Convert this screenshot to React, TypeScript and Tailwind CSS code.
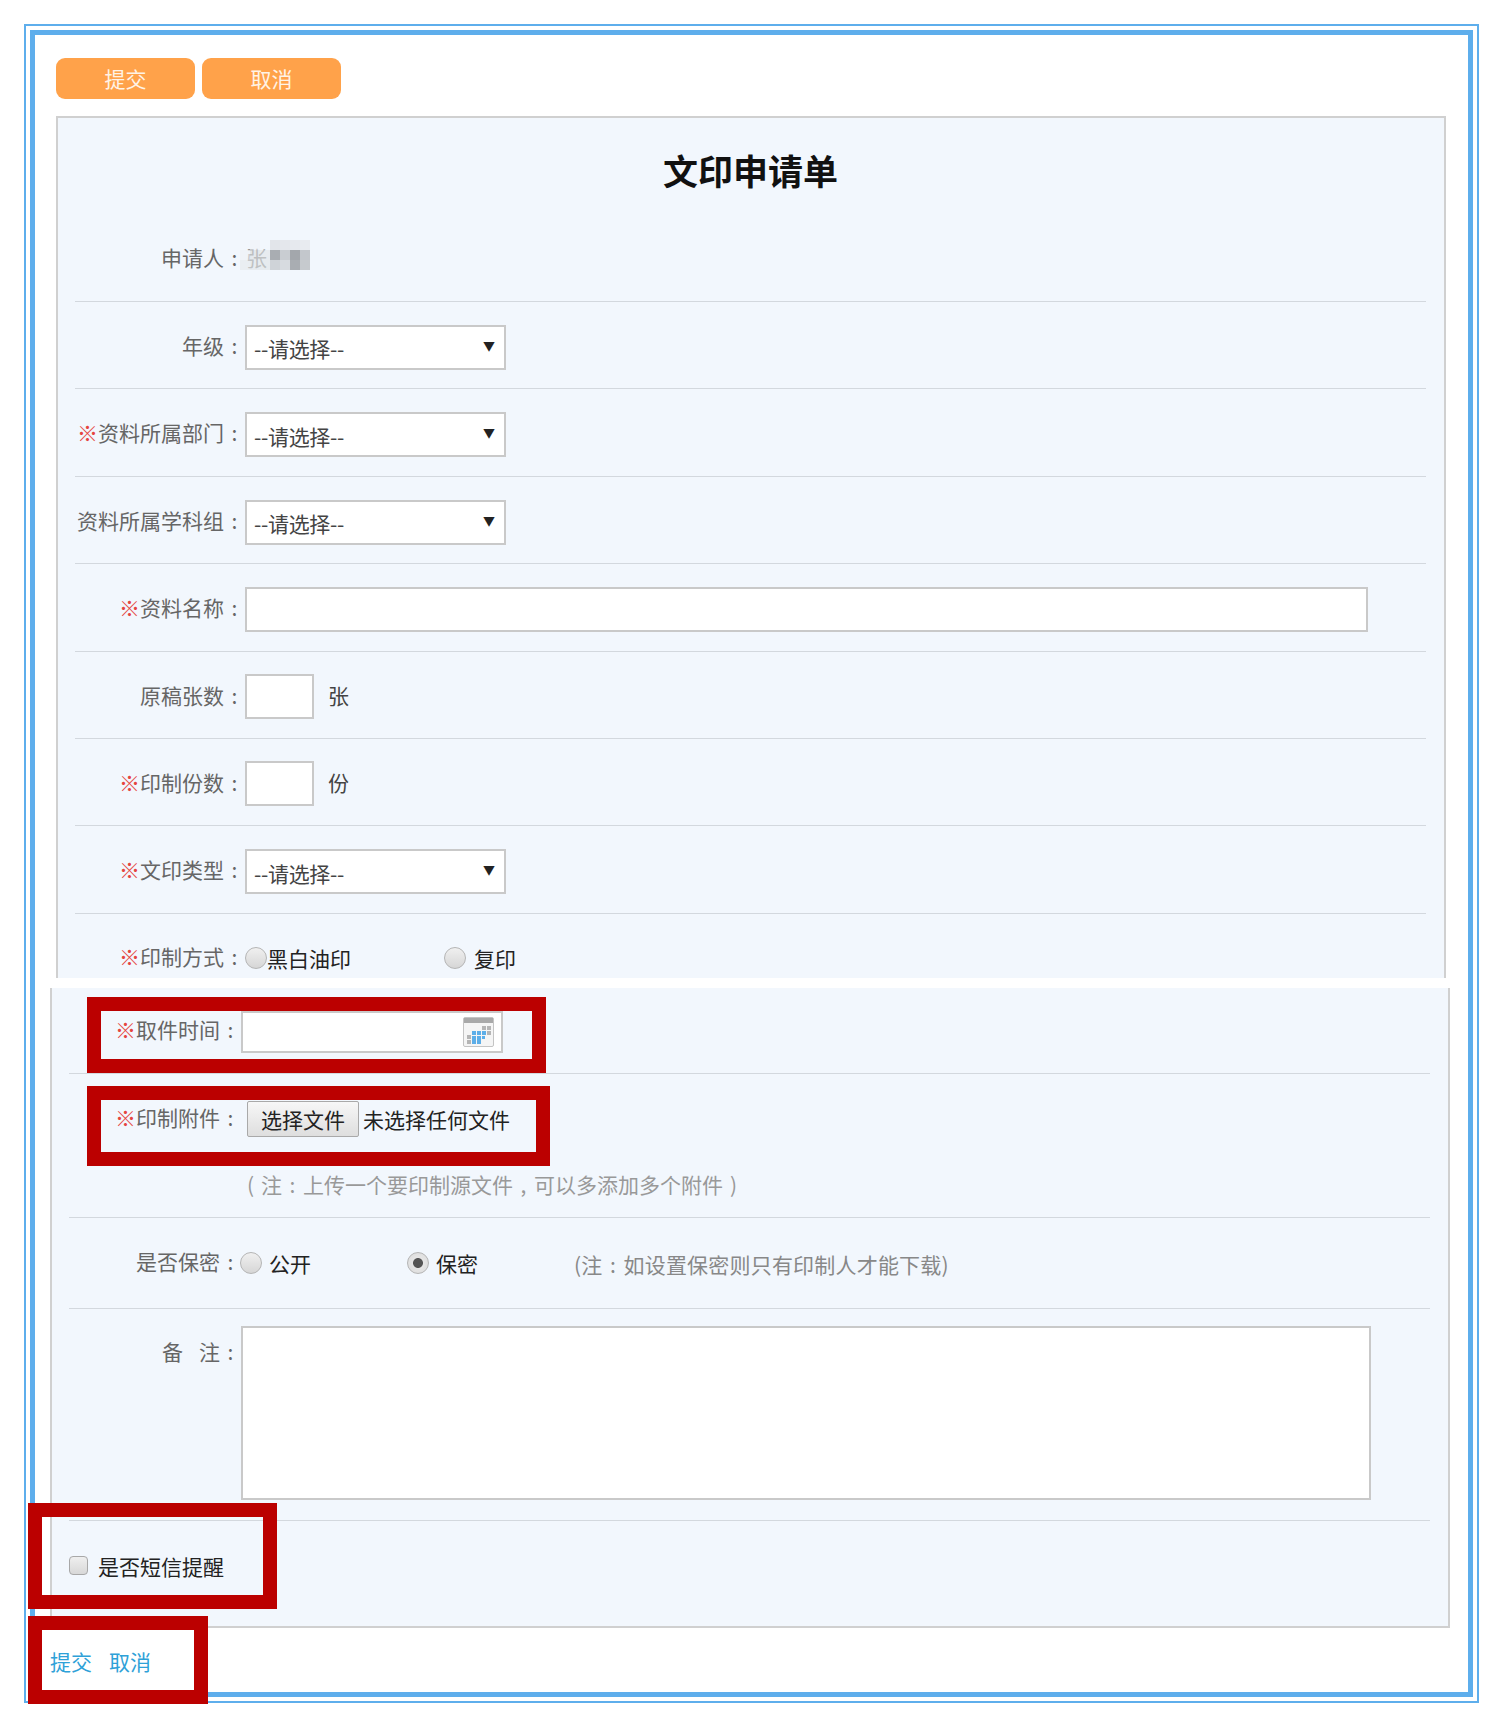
import type { ReactNode } from 'react';

const rowLine = 'border-b border-[#d3d8de]';
const fieldBorder = 'border-2 border-[#c9c9c9] bg-white outline-none';
const radioClass =
  "h-[22px] w-[22px] shrink-0 appearance-none rounded-full border border-[#b5b5b5] bg-[linear-gradient(#f0f0f0,#d6d6d6)] checked:bg-[radial-gradient(circle,#555_0,#555_32%,#e6e6e6_38%,#d9d9d9_100%)]";

// punctuation in the original sits centred in a full-width cell
function Cell({ children }: { children: ReactNode }) {
  return <span className="inline-block w-[21px] text-center">{children}</span>;
}

function Label({ children, required, className = 'w-[170px]' }: { children: ReactNode; required?: boolean; className?: string }) {
  return (
    <div className={`${className} shrink-0 text-right text-[21px] leading-[40px] text-[#666]`}>
      {required && <span className="text-[#e5453f]">※</span>}
      {children}
      <Cell>:</Cell>
    </div>
  );
}

function SelectBox() {
  return (
    <div className="relative h-[45px] w-[261px]">
      <select className={`${fieldBorder} h-full w-full appearance-none pl-[7px] pt-[3px] text-[21px] tracking-[-0.3px] text-[#444]`}>
        <option>--请选择--</option>
      </select>
      <span className="pointer-events-none absolute right-[11px] top-[11px] text-[12px] leading-[20px] text-[#222]">▼</span>
    </div>
  );
}

function FormRow({ label, required, children }: { label: string; required?: boolean; children: ReactNode }) {
  return (
    <div className={`flex h-[87.4px] pt-[23px] ${rowLine}`}>
      <Label required={required}>{label}</Label>
      {children}
    </div>
  );
}

function Mosaic() {
  const cells = [
    [0, 10, '#eef1f4'], [0, 20, '#e4e8ea'], [10, 0, '#f0f3f6'], [10, 10, '#d9dde0'], [10, 20, '#dfe3e6'],
    [20, 10, '#e0e4e6'], [20, 20, '#dde1e4'], [30, 0, '#e2e5ea'], [30, 10, '#a9adb2'], [30, 20, '#cfd3d8'],
    [40, 0, '#e4e7ec'], [40, 10, '#c9cdd2'], [40, 20, '#d7dbe0'], [50, 0, '#e6e9ee'], [50, 10, '#a3a7ac'],
    [50, 20, '#a9adb2'], [60, 0, '#e8ebf0'], [60, 10, '#c3c7cc'], [60, 20, '#c6cace'],
  ] as const;
  return (
    <svg className="absolute left-[240px] top-0" width="70" height="30" viewBox="0 0 70 30">
      {cells.map(([x, y, fill]) => (
        <rect key={`${x}-${y}`} x={x} y={y} width="10" height="10" fill={fill} fillOpacity={x < 30 ? 0.55 : 1} />
      ))}
    </svg>
  );
}

function CalendarIcon() {
  return (
    <svg className="absolute right-[9px] top-[6px]" width="31" height="30" viewBox="0 0 31 30">
      <rect x="0.5" y="0.5" width="30" height="29" rx="1.5" fill="#f5f5f5" stroke="#c4c4c4" />
      <rect x="1" y="1" width="29" height="5" fill="#a9a9a9" />
      <g fill="#b5b5b5">
        <rect x="19" y="9" width="4" height="4" />
        <rect x="24" y="9" width="4" height="4" />
        <rect x="24" y="14" width="4" height="4" />
        <rect x="4" y="18" width="4" height="4" />
        <rect x="4" y="23" width="4" height="4" />
      </g>
      <g fill="#5daee8">
        <rect x="9" y="14" width="4" height="4" />
        <rect x="14" y="14" width="4" height="4" />
        <rect x="19" y="14" width="4" height="4" />
        <rect x="9" y="19" width="4" height="8" />
        <rect x="14" y="19" width="4" height="8" />
        <rect x="19" y="19" width="3" height="3" />
      </g>
    </svg>
  );
}

function RedBox({ className }: { className: string }) {
  return <div className={`pointer-events-none absolute border-[14px] border-[#bb0000] ${className}`} />;
}

export default function App() {
  return (
    <div className="relative h-[1727px] w-[1503px] bg-white pl-[24px] pt-[24px] font-['Noto_Sans_CJK_SC',sans-serif]">
      <div className="h-[1679px] w-[1455px] border-2 border-[#5eaeec] p-[4px]">
        <div className="h-full border-[5px] border-[#5eaeec] pl-[21px] pt-[23px]">
          <div className="flex gap-[7px]">
            <button type="button" className="h-[41px] w-[139px] rounded-[9px] bg-[#ffa24a] text-[21px] text-[#fff3e6]">提交</button>
            <button type="button" className="h-[41px] w-[139px] rounded-[9px] bg-[#ffa24a] text-[21px] text-[#fff3e6]">取消</button>
          </div>

          <div className="mt-[17px] h-[862px] w-[1390px] border-x-2 border-t-2 border-[#d0d0d0] bg-[#f2f7fd] pl-[17px] pr-[18px]">
            <h1 className="h-[108px] text-center text-[35px] font-bold leading-[104px] text-[#111]">文印申请单</h1>
            <div className={`flex h-[76px] pt-[11px] ${rowLine}`}>
              <Label>申请人</Label>
              <div className="relative">
                <span className="pl-[1px] text-[21px] leading-[40px] text-[#999]">张</span>
              </div>
            </div>
            <FormRow label="年级"><SelectBox /></FormRow>
            <FormRow label="资料所属部门" required><SelectBox /></FormRow>
            <FormRow label="资料所属学科组"><SelectBox /></FormRow>
            <FormRow label="资料名称" required>
              <input className={`${fieldBorder} h-[45px] w-[1123px]`} />
            </FormRow>
            <FormRow label="原稿张数">
              <input className={`${fieldBorder} -mt-px h-[45px] w-[69px]`} />
              <span className="ml-[14px] text-[21px] leading-[40px] text-[#444]">张</span>
            </FormRow>
            <FormRow label="印制份数" required>
              <input className={`${fieldBorder} -mt-px h-[45px] w-[69px]`} />
              <span className="ml-[14px] text-[21px] leading-[40px] text-[#444]">份</span>
            </FormRow>
            <FormRow label="文印类型" required><SelectBox /></FormRow>
            <div className="flex pt-[22px]">
              <Label required>印制方式</Label>
              <label className="flex h-[40px] w-[199px] items-center text-[21px] text-[#222]">
                <input type="radio" name="mode" className={`${radioClass} mt-[4px]`} />
                <span className="mt-[7px]">黑白油印</span>
              </label>
              <label className="flex h-[40px] items-center gap-[8px] text-[21px] text-[#222]">
                <input type="radio" name="mode" className={`${radioClass} mt-[4px]`} />
                <span className="mt-[7px]">复印</span>
              </label>
            </div>
          </div>

          <div className="-ml-[6px] mt-[10px] h-[640px] w-[1400px] border-x-2 border-b-2 border-[#d0d0d0] bg-[#f2f7fd] pl-[17px] pr-[18px]">
            <div className={`flex h-[86px] pt-[23px] ${rowLine}`}>
              <Label required className="-mt-[2px] w-[172px]">取件时间</Label>
              <div className="relative h-[42px] w-[262px]">
                <input className={`${fieldBorder} h-full w-full`} />
                <CalendarIcon />
              </div>
            </div>
            <div className={`h-[144px] pt-[24px] ${rowLine}`}>
              <div className="flex">
                <Label required className="-mt-px w-[172px]">印制附件</Label>
                <div className="ml-[6px] flex items-center text-[21px] text-[#222]">
                  <button type="button" className="mt-[3px] h-[36px] w-[112px] rounded-[2px] border border-[#a9a9a9] bg-[linear-gradient(#f7f7f7,#dedede)] pt-[2px] text-[21px] text-[#222]">选择文件</button>
                  <span className="ml-[4px] mt-[5px]">未选择任何文件</span>
                </div>
              </div>
              <p className="ml-[171px] mt-[32px] text-[21px] leading-[30px] text-[#999]">
                <Cell>(</Cell>注<Cell>:</Cell>上传一个要印制源文件<Cell>,</Cell>可以多添加多个附件<Cell>)</Cell>
              </p>
            </div>
            <div className={`flex h-[91px] pt-[24px] ${rowLine}`}>
              <Label className="-mt-px w-[172px]">是否保密</Label>
              <label className="-ml-px flex h-[40px] w-[167px] items-center gap-[7px] text-[21px] text-[#222]">
                <input type="radio" name="secret" className={`${radioClass} mt-[1px]`} />
                <span className="mt-[3px]">公开</span>
              </label>
              <label className="flex h-[40px] w-[167px] items-center gap-[7px] text-[21px] text-[#222]">
                <input type="radio" name="secret" defaultChecked className={`${radioClass} mt-[1px]`} />
                <span className="mt-[3px]">保密</span>
              </label>
              <span className="mt-[2px] text-[21px] leading-[40px] tracking-[0.2px] text-[#888]">(注<Cell>:</Cell>如设置保密则只有印制人才能下载)</span>
            </div>
            <div className={`flex h-[212px] pt-[17px] ${rowLine}`}>
              <Label className="mt-[5px] w-[172px]">备<span className="ml-[16px]">注</span></Label>
              <textarea className={`${fieldBorder} h-[174px] w-[1130px] resize-none`} />
            </div>
            <label className="flex items-center gap-[10px] pt-[30px] text-[21px] leading-[30px] text-[#222]">
              <input type="checkbox" className="-mt-px h-[19px] w-[19px] appearance-none rounded-[4px] border border-[#a8a8a8] bg-[linear-gradient(#efefef,#d8d8d8)]" />
              <span>是否短信提醒</span>
            </label>
          </div>

          <div className="-ml-[6px] mt-[18px] flex gap-[17px] text-[21px] leading-[30px] text-[#2ea1d8]">
            <a href="#submit">提交</a>
            <a href="#cancel">取消</a>
          </div>
        </div>
      </div>

      <div className="absolute left-0 top-[240px]"><Mosaic /></div>
      <RedBox className="left-[87px] top-[997px] h-[76px] w-[459px]" />
      <RedBox className="left-[87px] top-[1086px] h-[80px] w-[463px]" />
      <RedBox className="left-[28px] top-[1503px] h-[106px] w-[249px]" />
      <RedBox className="left-[28px] top-[1616px] h-[88px] w-[180px]" />
    </div>
  );
}
